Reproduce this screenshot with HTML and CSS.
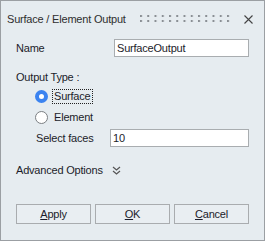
FILE: index.html
```html
<!DOCTYPE html>
<html lang="en">
<head>
  <meta charset="UTF-8" />
  <title>Surface / Element Output</title>
  <link rel="stylesheet" href="styles.css">
</head>
<body>
  <div class="dialog">
    <div class="titlebar">
      <span class="title">Surface / Element Output</span>
      <svg class="grip" width="92" height="10" viewBox="0 0 92 10">
        <defs>
          <pattern id="dots" width="7.25" height="5" patternUnits="userSpaceOnUse">
            <rect x="0" y="0" width="2" height="2" fill="#8a8f94" />
          </pattern>
        </defs>
        <rect width="92" height="10" fill="url(#dots)" />
      </svg>
      <svg class="close" width="9" height="9" viewBox="0 0 9 9">
        <path d="M0.5 0.5 L8.5 8.5 M8.5 0.5 L0.5 8.5" stroke="#444" stroke-width="1.1" fill="none" />
      </svg>
    </div>
    <div class="content">
      <div class="row name-row">
        <label class="row-label name-label">Name</label>
        <input class="field" type="text" value="SurfaceOutput">
      </div>
      <div class="group-label">Output Type :</div>
      <div class="radio-row surface-row">
        <span class="radio checked"></span>
        <span class="radio-text focused">Surface</span>
      </div>
      <div class="radio-row element-row">
        <span class="radio"></span>
        <span class="radio-text">Element</span>
      </div>
      <div class="row faces-row">
        <label class="row-label faces-label">Select faces</label>
        <input class="field" type="text" value="10">
      </div>
      <div class="advanced">
        <span>Advanced Options</span>
        <svg class="chevrons" width="9" height="10" viewBox="0 0 9 10">
          <path d="M1 1 L4.5 4 L8 1 M1 5 L4.5 8 L8 5" stroke="#555" stroke-width="1.2" fill="none" />
        </svg>
      </div>
      <div class="buttons">
        <button class="btn"><u>A</u>pply</button>
        <button class="btn"><u>O</u>K</button>
        <button class="btn"><u>C</u>ancel</button>
      </div>
    </div>
  </div>
</body>
</html>
```

FILE: styles.css
```css
body {
  margin: 0;
  font-family: "Liberation Sans", Arial, sans-serif;
  font-size: 11px;
  letter-spacing: -0.2px;
  color: #1c1c2a;
}
.dialog {
  width: 265px;
  height: 241px;
  box-sizing: border-box;
  border: 1px solid #9b9fa3;
  background: #e6ecf0;
  display: flex;
  flex-direction: column;
}
.titlebar {
  height: 36px;
  display: flex;
  align-items: center;
  padding-left: 6px;
  color: #2e2e2e;
}
.grip {
  margin-left: auto;
  margin-top: 2px;
}
.close {
  margin-left: 12px;
  margin-right: 11px;
}
.content {
  padding: 0 15px 0 15px;
  display: flex;
  flex-direction: column;
}
.row {
  display: flex;
  align-items: center;
  height: 18px;
}
.name-row {
  margin-top: 2px;
}
.row-label {
  flex: none;
}
.name-label {
  width: 98px;
}
.faces-row {
  margin-top: 4px;
  padding-left: 20px;
}
.faces-label {
  width: 74px;
}
.field {
  flex: 1;
  min-width: 0;
  height: 18px;
  box-sizing: border-box;
  border: 1px solid #a9adb0;
  background: #fff;
  padding: 0 2px;
  font: inherit;
  letter-spacing: inherit;
  color: #1c1c2a;
  outline: none;
}
.group-label {
  margin-top: 13px;
  height: 14px;
  line-height: 14px;
}
.radio-row {
  display: flex;
  align-items: center;
  height: 16px;
  padding-left: 19px;
}
.surface-row {
  margin-top: 4px;
}
.element-row {
  margin-top: 5px;
}
.radio {
  width: 13px;
  height: 13px;
  box-sizing: border-box;
  border-radius: 50%;
  border: 1px solid #7b7f83;
  background: #fff;
  flex: none;
}
.radio.checked {
  border: 4px solid #3b83f0;
  background: #fff;
}
.radio-text {
  margin-left: 6px;
  padding: 1px 0;
  line-height: 13px;
}
.radio-text.focused {
  margin-left: 4px;
  padding: 0 1px;
  border: 1px dotted #222;
}
.advanced {
  margin-top: 16px;
  height: 14px;
  display: flex;
  align-items: center;
  gap: 9px;
}
.chevrons {
  margin-top: 1px;
}
.buttons {
  margin-top: 27px;
  display: flex;
  gap: 4px;
}
.btn {
  width: 75px;
  height: 20px;
  padding: 0;
  border: 1px solid #a9acaf;
  background: #e9eef2;
  font: inherit;
  letter-spacing: inherit;
  color: #1c1c2a;
}
```
